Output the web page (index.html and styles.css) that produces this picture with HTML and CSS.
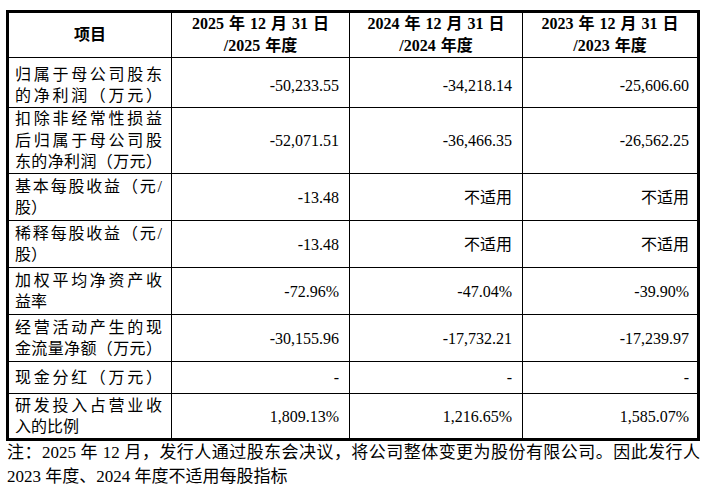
FILE: index.html
```html
<!DOCTYPE html>
<html lang="zh-CN">
<head>
<meta charset="utf-8">
<title>主要财务指标</title>
<link rel="stylesheet" href="styles.css">
</head>
<body>
<div class="page">
  <div class="frame">
    <table class="fin">
      <colgroup>
        <col class="c1"><col class="c2"><col class="c3"><col class="c4">
      </colgroup>
      <thead>
        <tr class="rh">
          <th>项目</th>
          <th>2025 年 12 月 31 日<br>/2025 年度</th>
          <th>2024 年 12 月 31 日<br>/2024 年度</th>
          <th class="last">2023 年 12 月 31 日<br>/2023 年度</th>
        </tr>
      </thead>
      <tbody>
        <tr class="r1">
          <td class="lbl"><span class="j">归属于母公司股东</span><span class="j">的净利润（万元）</span></td>
          <td class="num">-50,233.55</td>
          <td class="num">-34,218.14</td>
          <td class="num last">-25,606.60</td>
        </tr>
        <tr class="r3l">
          <td class="lbl"><span class="j">扣除非经常性损益</span><span class="j">后归属于母公司股</span><span class="j">东的净利润（万元）</span></td>
          <td class="num">-52,071.51</td>
          <td class="num">-36,466.35</td>
          <td class="num last">-26,562.25</td>
        </tr>
        <tr class="r2l">
          <td class="lbl"><span class="j">基本每股收益（元/</span><span class="l">股）</span></td>
          <td class="num">-13.48</td>
          <td class="num">不适用</td>
          <td class="num last">不适用</td>
        </tr>
        <tr class="r2l">
          <td class="lbl"><span class="j">稀释每股收益（元/</span><span class="l">股）</span></td>
          <td class="num">-13.48</td>
          <td class="num">不适用</td>
          <td class="num last">不适用</td>
        </tr>
        <tr class="r2l">
          <td class="lbl"><span class="j">加权平均净资产收</span><span class="l">益率</span></td>
          <td class="num">-72.96%</td>
          <td class="num">-47.04%</td>
          <td class="num last">-39.90%</td>
        </tr>
        <tr class="r2l">
          <td class="lbl"><span class="j">经营活动产生的现</span><span class="j">金流量净额（万元）</span></td>
          <td class="num">-30,155.96</td>
          <td class="num">-17,732.21</td>
          <td class="num last">-17,239.97</td>
        </tr>
        <tr class="r1l">
          <td class="lbl"><span class="j">现金分红（万元）</span></td>
          <td class="num">-</td>
          <td class="num">-</td>
          <td class="num last">-</td>
        </tr>
        <tr class="r8 bottom">
          <td class="lbl"><span class="j">研发投入占营业收</span><span class="l">入的比例</span></td>
          <td class="num">1,809.13%</td>
          <td class="num">1,216.65%</td>
          <td class="num last">1,585.07%</td>
        </tr>
      </tbody>
    </table>
  </div>
  <p class="note"><span class="j">注：2025 年 12 月，发行人通过股东会决议，将公司整体变更为股份有限公司。因此发行人</span><span class="l">2023 年度、2024 年度不适用每股指标</span></p>
</div>
</body>
</html>
```

FILE: styles.css
```css
html, body {
  margin: 0;
  padding: 0;
  background: #fff;
}

body {
  font-family: "Liberation Serif", "Noto Sans CJK SC", serif;
  color: #000;
}

.page {
  padding: 10px 8px 0 6px;
  width: 694px;
}

.frame {
  border: 3px solid #000;
  width: 688px;
}

.fin {
  width: 688px;
  table-layout: fixed;
  border-collapse: separate;
  border-spacing: 0;
  font-size: 16px;
}

.c1 { width: 163px; }
.c2 { width: 178px; }
.c3 { width: 173px; }
.c4 { width: 174px; }

.fin th,
.fin td {
  border-right: 1px solid #000;
  border-bottom: 1px solid #000;
  padding: 0;
  vertical-align: middle;
}

.fin .last {
  border-right: none;
}

.fin .bottom td {
  border-bottom: none;
}

.fin th {
  font-weight: bold;
  text-align: center;
  line-height: 22px;
  word-spacing: 1px;
}

.rh { height: 44px; }
.r1 { height: 50px; }
.r3l { height: 66px; }
.r2l { height: 47px; }
.r1l { height: 32px; }
.r8 { height: 44px; }

.fin .lbl {
  padding: 0 9px 0 6px;
  line-height: 21.5px;
}

.fin .r1 td {
  padding-top: 5px;
}

.j {
  display: block;
  text-align: justify;
  text-align-last: justify;
}

.l {
  display: block;
  text-align: left;
}

.fin .num {
  text-align: right;
  padding-right: 10px;
  line-height: 21px;
}

.fin .num.last {
  padding-right: 8px;
}

.note {
  margin: 0;
  padding-left: 1px;
  font-size: 17px;
  line-height: 24px;
}
```
